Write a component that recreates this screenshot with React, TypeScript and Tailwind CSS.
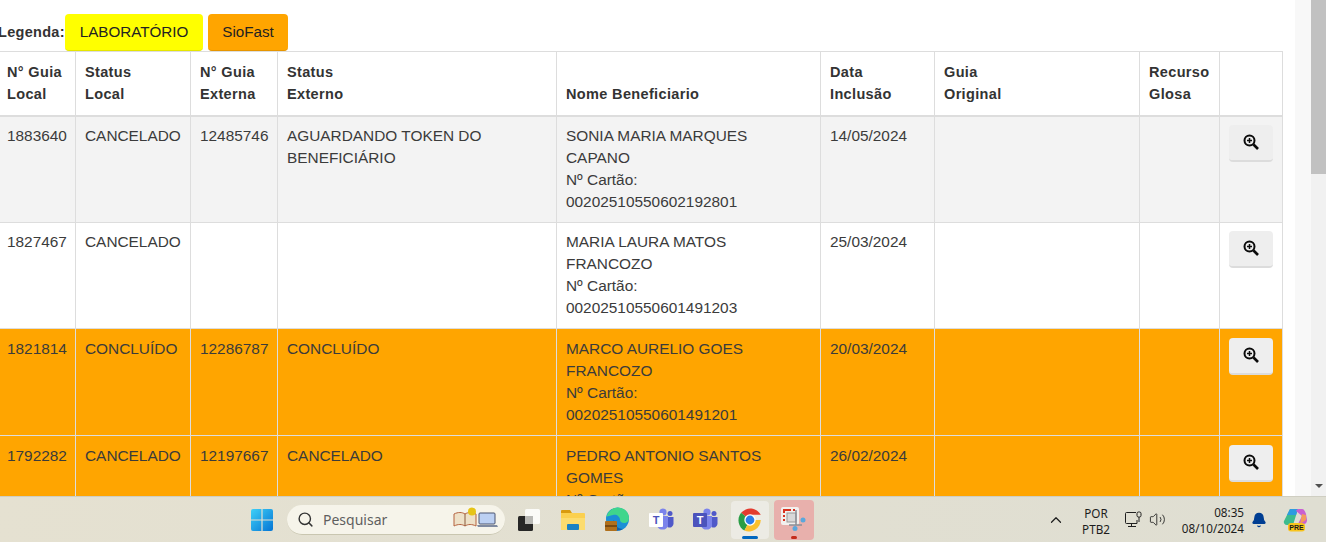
import { Search, ChevronUp, Volume2, Bell } from 'lucide-react';

const font = { fontFamily: '"Liberation Sans", Arial, sans-serif' };

const headers = [
    ['N° Guia', 'Local'],
    ['Status', 'Local'],
    ['N° Guia', 'Externa'],
    ['Status', 'Externo'],
    ['Nome Beneficiario'],
    ['Data', 'Inclusão'],
    ['Guia', 'Original'],
    ['Recurso', 'Glosa'],
    [],
];

const rows = [
    {
        id: '1883640',
        local: 'CANCELADO',
        ext: '12485746',
        status: ['AGUARDANDO TOKEN DO', 'BENEFICIÁRIO'],
        nome: ['SONIA MARIA MARQUES', 'CAPANO'],
        cartao: '00202510550602192801',
        data: '14/05/2024',
        cls: 'bg-[#f3f3f3] h-[107px]',
        pad: 'pt-[8px]',
    },
    {
        id: '1827467',
        local: 'CANCELADO',
        ext: '',
        status: [],
        nome: ['MARIA LAURA MATOS', 'FRANCOZO'],
        cartao: '00202510550601491203',
        data: '25/03/2024',
        cls: 'bg-white h-[106px]',
        pad: 'pt-[8px]',
    },
    {
        id: '1821814',
        local: 'CONCLUÍDO',
        ext: '12286787',
        status: ['CONCLUÍDO'],
        nome: ['MARCO AURELIO GOES', 'FRANCOZO'],
        cartao: '00202510550601491201',
        data: '20/03/2024',
        cls: 'bg-[#ffa500] h-[107px]',
        pad: 'pt-[9px]',
    },
    {
        id: '1792282',
        local: 'CANCELADO',
        ext: '12197667',
        status: ['CANCELADO'],
        nome: ['PEDRO ANTONIO SANTOS', 'GOMES'],
        cartao: '00202510550601491202',
        data: '26/02/2024',
        cls: 'bg-[#ffa500] h-[107px]',
        pad: 'pt-[9px]',
    },
];

function ZoomIcon() {
    return (
        <svg width="16" height="16" viewBox="0 0 16 16" fill="none" stroke="#0b0b0b">
            <circle cx="6.5" cy="6.5" r="5" strokeWidth="2" />
            <path d="M10.5 10.5 15 15" strokeWidth="2.6" />
            <path d="M6.5 4v5M4 6.5h5" strokeWidth="1.5" />
        </svg>
    );
}

function WindowsLogo() {
    return (
        <svg width="24" height="24" viewBox="0 0 24 24" className="mr-[13px]">
            <defs>
                <linearGradient id="win" x1="0" y1="0" x2="1" y2="1">
                    <stop offset="0" stopColor="#3fd0f7" />
                    <stop offset="1" stopColor="#0474d4" />
                </linearGradient>
            </defs>
            <path fill="url(#win)" d="M1 3a2 2 0 0 1 2-2h8.4v10.4H1zM12.6 1H21a2 2 0 0 1 2 2v8.4H12.6zM1 12.6h10.4V23H3a2 2 0 0 1-2-2zM12.6 12.6H23V21a2 2 0 0 1-2 2h-8.4z" />
        </svg>
    );
}

function SearchPill() {
    return (
        <div className="flex items-center w-[218px] h-[30px] rounded-full bg-[#f6f4ea] border-b border-[#c9c6b0] pl-[10px] pr-[6px] text-[14px] text-[#5f5f5f]" style={{ fontFamily: '"Noto Sans", sans-serif' }}>
            <Search size={17} strokeWidth={2} color="#333" className="mr-[9px]" />
            <span className="flex-1">Pesquisar</span>
            <svg width="46" height="24" viewBox="0 0 46 24">
                <path d="M1 7c4-2 8-2 11 0 3-2 7-2 11 0v12c-4-2-8-2-11 0-3-2-7-2-11 0z" fill="#eee1c8" stroke="#b5623f" strokeWidth="1" />
                <path d="M12 7v12" stroke="#8a5a3c" />
                <circle cx="19" cy="4.5" r="4" fill="#e6c417" />
                <rect x="26" y="6" width="16" height="11" rx="1" fill="#bcd0f2" stroke="#4a5570" />
                <path d="M24 18h20l1 2H25z" fill="#7f8aa0" />
            </svg>
        </div>
    );
}

function TaskView() {
    return (
        <svg width="24" height="24" viewBox="0 0 24 24" className="ml-[12px]">
            <rect x="8" y="1" width="15" height="15" rx="1.5" fill="#fbfbf8" />
            <rect x="1" y="8" width="15" height="15" rx="1.5" fill="#262626" />
            <rect x="8" y="8" width="8" height="8" fill="#b9b9b5" />
        </svg>
    );
}

function FolderIcon() {
    return (
        <svg width="24" height="22" viewBox="0 0 24 22" className="ml-[20px]">
            <path d="M0 2a1 1 0 0 1 1-1h8l2 3h-11z" fill="#d99b0f" />
            <path d="M0 4h23a1 1 0 0 1 1 1v16H1a1 1 0 0 1-1-1z" fill="#fbd04f" />
            <path d="M0 9h24v12H1a1 1 0 0 1-1-1z" fill="#fcdc6e" />
            <rect x="6" y="15" width="12" height="6" rx="1" fill="#1a82c4" />
        </svg>
    );
}

function EdgeIcon() {
    return (
        <svg width="24" height="25" viewBox="0 0 24 25" className="ml-[20px]">
            <circle cx="12.5" cy="12" r="11.5" fill="#1b8fd6" />
            <path d="M1.5 10C3 3 9 .5 13 .5 19 .5 24 5 24 11c0 3-2 5-5 5-2 0-4-1-4-3 0-4-4-6-7-5-3 .7-5 1-6.500 2z" fill="#3fd68c" />
            <path d="M9 13c0 5 4 9 9 9-3 2-7 2-9 1-2-2-2-7 0-10z" fill="#0f5fa8" />
            <rect x="0" y="14" width="12" height="10" rx="1" fill="#b0701c" />
            <rect x="0" y="18" width="12" height="2" fill="#7a4a10" />
        </svg>
    );
}

function TeamsIcon({ boxFill, letter, bodyFill }: { boxFill: string; letter: string; bodyFill: string }) {
    return (
        <svg width="25" height="24" viewBox="0 0 25 24">
            <circle cx="14" cy="4" r="3.6" fill={bodyFill} />
            <circle cx="21" cy="5.500" r="2.500" fill="#5059c9" />
            <path d="M17 9h7.500v7a4 4 0 0 1-6 3z" fill="#5059c9" />
            <path d="M8 8h11v10a6 6 0 0 1-11 0z" fill={bodyFill} />
            <rect x="0" y="5" width="14" height="14" rx="1" fill={boxFill} />
            <text x="7" y="16" textAnchor="middle" fontSize="11" fontWeight="700" fill={letter} style={font}>T</text>
        </svg>
    );
}

function ChromeIcon() {
    return (
        <svg width="24" height="24" viewBox="0 0 24 24">
            <path d="M12 12 3.100 4.800A12 12 0 0 1 22.800 6.800H12z" fill="#e33b2e" />
            <path d="M12 12 6.400 22.600A12 12 0 0 1 3.100 4.800z" fill="#2a9d46" />
            <path d="M12 12h10.800A12 12 0 0 1 6.400 22.600z" fill="#fbc02d" />
            <circle cx="12" cy="12" r="5.700" fill="#fff" />
            <circle cx="12" cy="12" r="4.400" fill="#2b7de9" />
        </svg>
    );
}

function SnipIcon() {
    return (
        <svg width="26" height="26" viewBox="0 0 26 26">
            <rect x="0" y="0" width="18" height="18" rx="2" fill="#f2f0ee" />
            <path d="M2 2h8v2H4v2H2zM2 8h2v2H2zM2 12h2v2H2zM12 2h2v2h-2z" fill="#d8321f" />
            <rect x="6" y="6" width="9" height="9" fill="#d8d8d8" stroke="#9a9a9a" />
            <path d="M15 3v15h6M8 18h13" stroke="#8a8f96" strokeWidth="1.500" fill="none" />
            <circle cx="22" cy="13" r="2.500" fill="#5aa7dc" />
            <circle cx="14" cy="21.500" r="2.500" fill="#5aa7dc" />
        </svg>
    );
}

function NetworkIcon() {
    return (
        <svg width="17" height="17" viewBox="0 0 17 17" fill="none" stroke="#1f1f1f" strokeWidth="1">
            <path d="M11 1.500H1.500a1 1 0 0 0-1 1v9a1 1 0 0 0 1 1H12V9" />
            <path d="M6.500 12.500v3M3 15.500h8" />
            <rect x="12" y="1" width="4" height="5" rx="1.500" />
            <path d="M14 6v5" />
        </svg>
    );
}

function CopilotIcon() {
    return (
        <svg width="24" height="24" viewBox="0 0 24 24">
            <path d="M7 1h8L10 17H4a3 3 0 0 1-3-4z" fill="#3dbb8f" />
            <path d="M7 1h8l-2 6H4z" fill="#2d9be0" />
            <path d="M13 3c1-2 2-2 4-2h2c2 0 3 2 4 5l1 6c0 2-1 4-3 4h-6l4-8z" fill="#c95fd1" />
            <path d="M19 6l4 1v5l-6 4z" fill="#f39a5c" />
            <rect x="5" y="15" width="17" height="8.500" rx="3" fill="#f8c41c" />
            <text x="13.500" y="22" textAnchor="middle" fontSize="7" fontWeight="700" fill="#1a1a1a" style={font}>PRE</text>
        </svg>
    );
}

export default function App() {
    return (
        <div className="relative flex flex-col w-[1326px] h-[542px] overflow-hidden bg-white text-[#333]" style={font}>
            <div className="flex h-[496px]">
                {/* pagina */}
                <div className="w-[1295px] overflow-hidden">
                    <div className="w-[1284px] -ml-[2px] pt-[14px]">
                        <div className="flex items-stretch h-[37px]">
                            <b className="self-center shrink-0 w-[67px] text-[14.5px] tracking-[0.3px] whitespace-nowrap">Legenda:</b>
                            <div className="flex items-center justify-center w-[138px] mr-[5px] rounded-[4px] bg-[#ffff00] border-b border-[#e6e600] text-[15.2px] text-[#222]">LABORATÓRIO</div>
                            <div className="flex items-center justify-center w-[80px] rounded-[4px] bg-[#ffa500] border-b border-[#e69500] text-[15.2px] text-[#222]">SioFast</div>
                        </div>
                        <table className="table-fixed border-collapse w-[1284px] text-[15.4px] leading-[22px] text-[#3b3b3b]">
                            <colgroup>
                                <col className="w-[77px]" />
                                <col className="w-[115px]" />
                                <col className="w-[87px]" />
                                <col className="w-[279px]" />
                                <col className="w-[264px]" />
                                <col className="w-[114px]" />
                                <col className="w-[205px]" />
                                <col className="w-[80px]" />
                                <col className="w-[63px]" />
                            </colgroup>
                            <thead>
                                <tr className="h-[64px]">
                                    {headers.map((h, i) => (
                                        <th key={i} className={`border border-[#ddd] border-b-2 pr-[9px] pt-[8px] pb-[10px] text-left align-bottom font-bold tracking-[0.35px] text-[14.5px] text-[#333] whitespace-nowrap ${i === 0 ? 'pl-[8px]' : 'pl-[9px]'}`}>
                                            {h.map((line) => (
                                                <div key={line}>{line}</div>
                                            ))}
                                        </th>
                                    ))}
                                </tr>
                            </thead>
                            <tbody>
                                {rows.map((r) => (
                                    <tr key={r.id} className={r.cls}>
                                        <td className={`border border-[#ddd] pl-[8px] pr-[9px] pb-[8px] align-top ${r.pad}`}>{r.id}</td>
                                        <td className={`border border-[#ddd] px-[9px] pb-[8px] align-top ${r.pad}`}>{r.local}</td>
                                        <td className={`border border-[#ddd] px-[9px] pb-[8px] align-top ${r.pad}`}>{r.ext}</td>
                                        <td className={`border border-[#ddd] px-[9px] pb-[8px] align-top whitespace-nowrap ${r.pad}`}>
                                            {r.status.map((s) => (
                                                <div key={s}>{s}</div>
                                            ))}
                                        </td>
                                        <td className={`border border-[#ddd] px-[9px] pb-[8px] align-top whitespace-nowrap ${r.pad}`}>
                                            {r.nome.map((s) => (
                                                <div key={s}>{s}</div>
                                            ))}
                                            <div>Nº Cartão:</div>
                                            <div>{r.cartao}</div>
                                        </td>
                                        <td className={`border border-[#ddd] px-[9px] pb-[8px] align-top ${r.pad}`}>{r.data}</td>
                                        <td className="border border-[#ddd]"></td>
                                        <td className="border border-[#ddd]"></td>
                                        <td className={`border border-[#ddd] pl-[9px] align-top ${r.pad}`}>
                                            <button className="flex items-center justify-center w-[44px] h-[37px] rounded-[4px] bg-[#eeeeee] border-b-2 border-[#dcdcdc]">
                                                <span className="-mt-[1px] -ml-[1px]"><ZoomIcon /></span>
                                            </button>
                                        </td>
                                    </tr>
                                ))}
                            </tbody>
                        </table>
                    </div>
                </div>

                {/* barras de rolagem */}
                <div className="w-[16px] bg-[#f8f8f8]"></div>
                <div className="relative w-[15px] bg-[#f1f1f1]">
                    <div className="h-[174px] bg-[#c1c1c1]"></div>
                    <div className="absolute left-[4px] bottom-[8px] w-0 h-0 border-x-[4px] border-x-transparent border-t-[4px] border-t-[#505050]"></div>
                </div>
            </div>

            {/* barra de tarefas */}
            <div className="flex items-center h-[46px] pl-[250px] bg-gradient-to-r from-[#e5e1d1] to-[#dfded2] border-t border-[#cfcec2] text-[#1c1c1c]">
                <WindowsLogo />
                <SearchPill />
                <TaskView />
                <FolderIcon />
                <EdgeIcon />
                <div className="ml-[20px]"><TeamsIcon boxFill="#ffffff" letter="#4b53bc" bodyFill="#7b83eb" /></div>
                <div className="ml-[19px]"><TeamsIcon boxFill="#4b53bc" letter="#ffffff" bodyFill="#7b83eb" /></div>
                <div className="relative flex items-center justify-center w-[38px] h-[38px] ml-[13px] rounded-[4px] bg-[#ecebe4]">
                    <ChromeIcon />
                    <div className="absolute bottom-0 left-[11px] w-[16px] h-[3px] rounded-full bg-[#0067c0]"></div>
                </div>
                <div className="relative flex items-center justify-center w-[40px] h-[40px] ml-[5px] rounded-[4px] bg-[#e8b0ac]">
                    <SnipIcon />
                    <div className="absolute bottom-[1px] left-[17px] w-[6px] h-[3px] rounded-full bg-[#c42b1c]"></div>
                </div>
                <ChevronUp size={18} strokeWidth={1.6} className="ml-[233px]" />
                <div className="w-[44px] ml-[9px] pt-[2px] text-center text-[11.7px] leading-[16px]" style={{ fontFamily: '"Noto Sans", sans-serif' }}>
                    <div>POR</div>
                    <div>PTB2</div>
                </div>
                <div className="ml-[7px]"><NetworkIcon /></div>
                <Volume2 size={17} strokeWidth={1.2} className="ml-[7px]" />
                <div className="w-[78px] text-right text-[11.7px] leading-[16px] whitespace-nowrap" style={{ fontFamily: '"Noto Sans", sans-serif' }}>
                    <div>08:35</div>
                    <div>08/10/2024</div>
                </div>
                <Bell size={16} fill="#003e92" color="#003e92" className="ml-[7px]" />
                <div className="ml-[16px]"><CopilotIcon /></div>
            </div>
        </div>
    );
}
